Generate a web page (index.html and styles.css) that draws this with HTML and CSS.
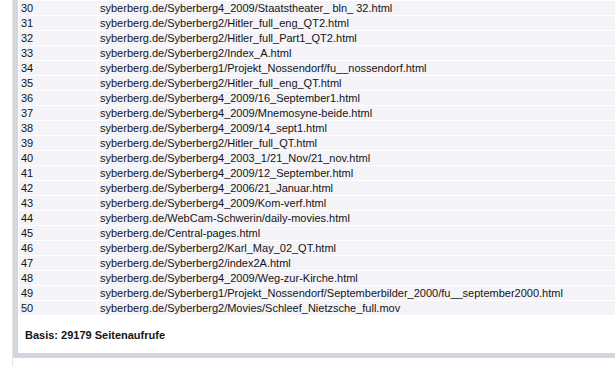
FILE: index.html
```html
<!DOCTYPE html>
<html lang="de">
<head>
<meta charset="utf-8">
<title>Seitenaufrufe</title>
<link rel="stylesheet" href="styles.css">
</head>
<body>
<div class="wrap">
  <div class="panel">
    <table class="stats">
      <tr><td class="num">30</td><td class="url">syberberg.de/Syberberg4_2009/Staatstheater_ bln_ 32.html</td></tr>
      <tr><td class="num">31</td><td class="url">syberberg.de/Syberberg2/Hitler_full_eng_QT2.html</td></tr>
      <tr><td class="num">32</td><td class="url">syberberg.de/Syberberg2/Hitler_full_Part1_QT2.html</td></tr>
      <tr><td class="num">33</td><td class="url">syberberg.de/Syberberg2/Index_A.html</td></tr>
      <tr><td class="num">34</td><td class="url">syberberg.de/Syberberg1/Projekt_Nossendorf/fu__nossendorf.html</td></tr>
      <tr><td class="num">35</td><td class="url">syberberg.de/Syberberg2/Hitler_full_eng_QT.html</td></tr>
      <tr><td class="num">36</td><td class="url">syberberg.de/Syberberg4_2009/16_September1.html</td></tr>
      <tr><td class="num">37</td><td class="url">syberberg.de/Syberberg4_2009/Mnemosyne-beide.html</td></tr>
      <tr><td class="num">38</td><td class="url">syberberg.de/Syberberg4_2009/14_sept1.html</td></tr>
      <tr><td class="num">39</td><td class="url">syberberg.de/Syberberg2/Hitler_full_QT.html</td></tr>
      <tr><td class="num">40</td><td class="url">syberberg.de/Syberberg4_2003_1/21_Nov/21_nov.html</td></tr>
      <tr><td class="num">41</td><td class="url">syberberg.de/Syberberg4_2009/12_September.html</td></tr>
      <tr><td class="num">42</td><td class="url">syberberg.de/Syberberg4_2006/21_Januar.html</td></tr>
      <tr><td class="num">43</td><td class="url">syberberg.de/Syberberg4_2009/Kom-verf.html</td></tr>
      <tr><td class="num">44</td><td class="url">syberberg.de/WebCam-Schwerin/daily-movies.html</td></tr>
      <tr><td class="num">45</td><td class="url">syberberg.de/Central-pages.html</td></tr>
      <tr><td class="num">46</td><td class="url">syberberg.de/Syberberg2/Karl_May_02_QT.html</td></tr>
      <tr><td class="num">47</td><td class="url">syberberg.de/Syberberg2/index2A.html</td></tr>
      <tr><td class="num">48</td><td class="url">syberberg.de/Syberberg4_2009/Weg-zur-Kirche.html</td></tr>
      <tr><td class="num">49</td><td class="url">syberberg.de/Syberberg1/Projekt_Nossendorf/Septemberbilder_2000/fu__september2000.html</td></tr>
      <tr><td class="num">50</td><td class="url">syberberg.de/Syberberg2/Movies/Schleef_Nietzsche_full.mov</td></tr>
    </table>
    <p class="basis">Basis: 29179 Seitenaufrufe</p>
  </div>
</div>
</body>
</html>
```
FILE: styles.css
```css
html, body {
  margin: 0;
  padding: 0;
  background: #ffffff;
  height: 100%;
}
body {
  font-family: "Liberation Sans", Arial, sans-serif;
  font-size: 11px;
  color: #151515;
  overflow: hidden;
}
.wrap {
  margin-left: 12px;
  border-left: 1px solid #e6e6e9;
  min-height: 100%;
}
.panel {
  border-left: 5px solid #d3d6dd;
  border-bottom: 5px solid #d3d6dd;
  overflow: hidden;
}
.stats {
  border-collapse: separate;
  border-spacing: 1px 1px;
  width: calc(100% + 10px);
}
.stats td {
  background: #f3f3f8;
  height: 14px;
  padding: 0 0 0 2px;
  line-height: 14px;
  white-space: nowrap;
  vertical-align: middle;
}
.stats td.num {
  width: 76px;
}
.basis {
  margin: 0;
  padding: 12px 0 11px 7px;
  font-weight: bold;
  line-height: 14px;
}
```
